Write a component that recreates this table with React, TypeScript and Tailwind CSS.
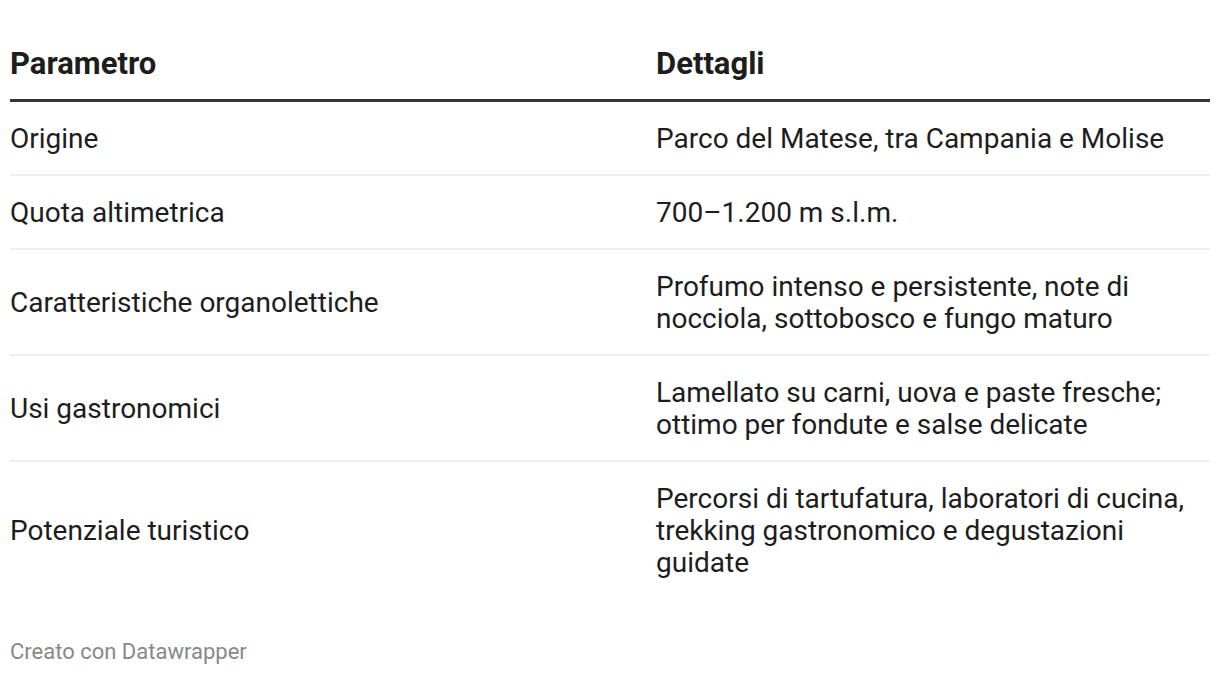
import React from "react";

const rows: [string, string][] = [
  ["Origine", "Parco del Matese, tra Campania e Molise"],
  ["Quota altimetrica", "700–1.200 m s.l.m."],
  ["Caratteristiche organolettiche", "Profumo intenso e persistente, note di nocciola, sottobosco e fungo maturo"],
  ["Usi gastronomici", "Lamellato su carni, uova e paste fresche; ottimo per fondute e salse delicate"],
  ["Potenziale turistico", "Percorsi di tartufatura, laboratori di cucina, trekking gastronomico e degustazioni guidate"],
];

export default function App() {
  return (
    <div className="w-[1220px] h-[674px] bg-white px-[10px] pt-[46px] font-['Roboto',sans-serif] text-[#1d1d1d]">
      <div className="grid grid-cols-[646px_1fr] border-b-[3px] border-[#333333] pb-[17px] text-[31px] leading-[36px] font-bold">
        <div>Parametro</div>
        <div>Dettagli</div>
      </div>
      {rows.map(([a, b], i) => (
        <div
          key={i}
          className={
            "grid grid-cols-[646px_1fr] items-center pt-[21px] pb-[19px] text-[28px] leading-[32px] " +
            (i < rows.length - 1 ? "border-b-[2px] border-[#eeeeee]" : "")
          }
        >
          <div>{a}</div>
          <div>{b}</div>
        </div>
      ))}
      <div className="mt-[40px] text-[22px] leading-[28px] text-[#888888]">Creato con Datawrapper</div>
    </div>
  );
}
